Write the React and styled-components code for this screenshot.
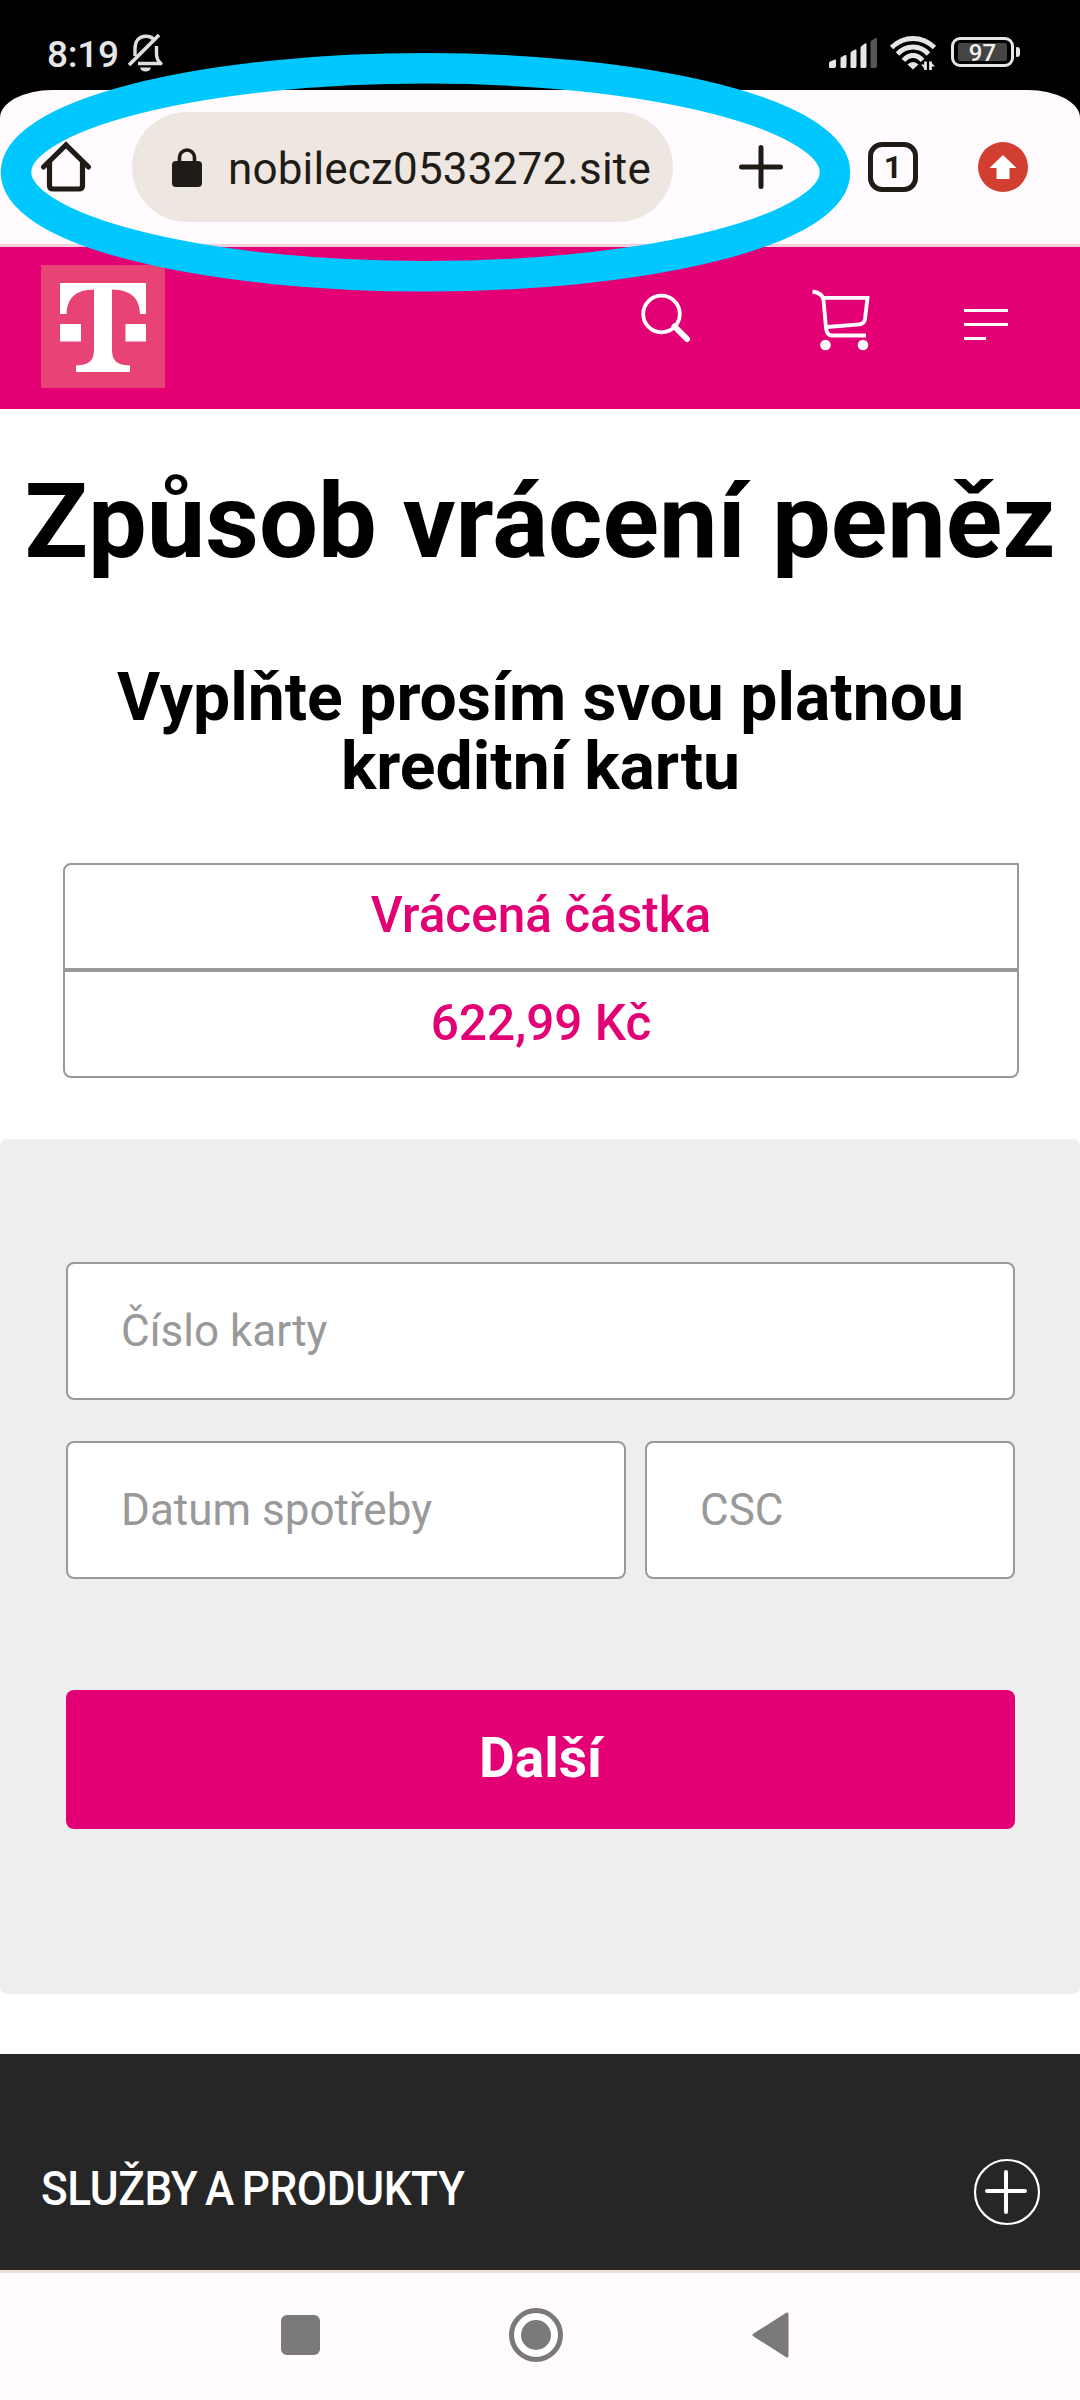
import React from "react";
import styled, { createGlobalStyle } from "styled-components";

const magenta = "#e20074";

const GlobalStyle = createGlobalStyle`
  *, *::before, *::after { box-sizing: border-box; }
  body { margin: 0; background: #fff; font-family: Roboto, "Noto Sans", sans-serif; }
  svg { display: block; flex: none; overflow: visible; }
`;

const Screen = styled.div`
  position: relative;
  display: flex;
  flex-direction: column;
  width: 1080px;
  height: 2400px;
  overflow: hidden;
  background: #fff;
`;

const TopArea = styled.div`
  background: #000;
`;

const StatusBar = styled.div`
  display: flex;
  height: 90px;
  padding: 34px 60px 0 47px;
`;

const Clock = styled.span`
  width: 81px;
  line-height: 42px;
  font-size: 37px;
  font-weight: 500;
  letter-spacing: -0.3px;
  color: #e6e6e6;
`;

const StatusIcons = styled.div`
  display: flex;
  gap: 13px;
  margin-left: auto;
  padding-top: 2px;
`;

const Battery = styled.div`
  display: flex;
  align-items: center;
  gap: 2px;
  height: 31px;
  margin-left: 2px;
  padding-top: 1px;
`;

const BatteryCell = styled.div`
  width: 63px;
  height: 30px;
  padding: 3px;
  border: 3px solid #e6e6e6;
  border-radius: 9px;
`;

const BatteryFill = styled.div`
  width: 49px;
  height: 18px;
  margin-left: 1px;
  border-radius: 2px;
  background: #444;
  color: #f0f0f0;
  font-size: 24px;
  font-weight: 500;
  line-height: 21px;
  text-align: center;
`;

const BatteryTip = styled.div`
  width: 4px;
  height: 10px;
  border-radius: 1px 3px 3px 1px;
  background: #e6e6e6;
`;

const BrowserBar = styled.div`
  display: flex;
  align-items: center;
  height: 157px;
  padding: 0 52px 0 41px;
  border-bottom: 3px solid #f6cfdc;
  border-radius: 52px 52px 0 0 / 28px 28px 0 0;
  background: #fffbff;
`;

const AddressPill = styled.div`
  display: flex;
  align-items: center;
  width: 541px;
  height: 110px;
  margin: 0 66px 0 41px;
  padding-left: 40px;
  border-radius: 55px;
  background: #ede6e1;
`;

const Address = styled.span`
  padding: 3px 0 0 26px;
  color: #1f1b16;
  font-size: 44px;
  line-height: 60px;
  letter-spacing: 0.17px;
  white-space: nowrap;
`;

const TabCount = styled.div`
  display: flex;
  align-items: center;
  justify-content: center;
  width: 50px;
  height: 50px;
  margin: 0 60px 0 85px;
  border: 5.5px solid #1f1b16;
  border-radius: 14px;
  color: #1f1b16;
  font-size: 32px;
  font-weight: 700;
  line-height: 36px;
`;

const SiteHeader = styled.header`
  display: flex;
  align-items: flex-start;
  height: 162px;
  padding: 18px 72px 0 41px;
  background: ${magenta};
`;

const Logo = styled.div`
  width: 124px;
  height: 123px;
  padding: 18px 19px;
  background: #e74475;
`;

const HeaderActions = styled.div`
  display: flex;
  margin-left: auto;
`;

const SearchSlot = styled.div`
  padding: 29px 121px 0 0;
`;

const CartSlot = styled.div`
  padding: 25px 94px 0 0;
`;

const MenuLines = styled.div`
  display: flex;
  flex-direction: column;
  gap: 11px;
  width: 44px;
  padding-top: 44px;
`;

const MenuLine = styled.span`
  width: ${(p) => (p.$short ? 22 : 44)}px;
  height: 3px;
  background: #fff;
`;

const Title = styled.h1`
  margin: 53px 0 0;
  font-size: 104.5px;
  font-weight: 700;
  line-height: 120px;
  text-align: center;
  white-space: nowrap;
  color: #000;
`;

const Subtitle = styled.h2`
  margin: 81px 0 62px;
  padding-left: 1px;
  font-size: 66.1px;
  font-weight: 700;
  line-height: 69px;
  text-align: center;
  color: #000;
`;

const AmountTable = styled.div`
  width: 956px;
  margin: 0 61px 61px 63px;
  color: ${magenta};
  font-size: 49.5px;
  font-weight: 500;
  text-align: center;
`;

const AmountCell = styled.div`
  height: ${(p) => (p.$last ? 108 : 107)}px;
  padding-bottom: 3px;
  border: 2px solid #999;
  border-radius: ${(p) => (p.$last ? "0 0 8px 8px" : "8px 0 0 0")};
  line-height: ${(p) => (p.$last ? 103 : 101)}px;
`;

const CardForm = styled.section`
  height: 855px;
  padding: 123px 65px 0 66px;
  border-radius: 8px;
  background: #eee;
`;

const FieldRow = styled.div`
  display: grid;
  grid-template-columns: ${(p) => (p.$split ? "560px 370px" : "1fr")};
  gap: 19px;
  margin-bottom: 41px;
`;

const Field = styled.div`
  height: 138px;
  padding-left: 53px;
  border: 2px solid #999;
  border-radius: 8px;
  background: #fff;
  color: #999;
  font-size: 44px;
  line-height: 134px;
`;

const NextButton = styled.div`
  height: 139px;
  margin-top: 111px;
  border-radius: 8px;
  background: ${magenta};
  color: #fff;
  font-size: 55px;
  font-weight: 700;
  line-height: 137px;
  text-align: center;
`;

const Footer = styled.footer`
  display: flex;
  align-items: flex-start;
  justify-content: space-between;
  height: 216px;
  margin-top: 60px;
  padding: 105px 40px 0 41px;
  background: #262626;
`;

const FooterTitle = styled.span`
  color: #fff;
  font-size: 49px;
  font-weight: 500;
  letter-spacing: -0.45px;
  word-spacing: -3px;
  line-height: 60px;
  white-space: nowrap;
  transform: scaleX(0.9);
  transform-origin: left center;
`;

const NavBar = styled.nav`
  display: flex;
  align-items: center;
  height: 130px;
  padding: 0 291px 3px 281px;
  border-top: 3px solid #ebe0d9;
  background: #fffbff;
  justify-content: space-between;
`;

const Highlight = styled.svg`
  position: absolute;
  top: 0;
  left: 0;
`;

const MutedBell = () => (
  <svg width="36" height="38" viewBox="0 0 36 38" fill="none" stroke="#e0e0e0" strokeWidth="3.4">
    <path d="M7 22V15C7 7 11 2.300 18 2.300C22 2.300 25 4 27 7" />
    <path d="M28.500 12V20C28.500 24 30 27 33 29.500H10" strokeLinejoin="round" />
    <path d="M1 31L31 1" strokeWidth="3.800" />
    <path d="M12 33.500H23C22 36.500 20 37.500 17.500 37.500C15 37.500 13 36.500 12 33.500Z" fill="#e0e0e0" stroke="none" />
  </svg>
);

const Signal = () => (
  <svg width="48" height="32" viewBox="0 0 48 32" fill="#e6e6e6">
    <path d="M0 31V27Q0 26 1 25.500L6 23.500Q7 23.300 7 24.500V30Q7 32 5 32H1Q0 32 0 31Z" />
    <path d="M11.500 31V22.500Q11.500 21.500 12.500 21L16 19Q17.500 18.500 17.500 20V30Q17.500 32 16 32H12.500Q11.500 32 11.500 31Z" />
    <path d="M21.500 31V17.500Q21.500 16.500 22.500 15.500L26 13.500Q27.500 13 27.500 14.500V30Q27.500 32 26 32H22.500Q21.500 32 21.500 31Z" />
    <path d="M31.500 31V12Q31.500 11 32.500 10L36 7.500Q37.500 6.500 37.500 8.500V30Q37.500 32 36 32H32.500Q31.500 32 31.500 31Z" />
    <path fill="#555" d="M41.500 31V6.500Q41.500 5.500 42.500 4.500L46.500 2Q48 1.500 48 3V30Q48 32 46.500 32H42.500Q41.500 32 41.500 31Z" />
  </svg>
);

const Wifi = () => (
  <svg width="46" height="34" viewBox="0 0 46 34">
    <g fill="none" stroke="#e6e6e6" strokeWidth="4.800">
      <path d="M1.500 11.500Q11 2.500 23 2.500T44.500 11.500" />
      <path d="M7.500 18Q14 11 23 11T38.500 18" />
      <path d="M13.500 24.500Q17.500 19.500 23 19.500T32.500 24.500" />
    </g>
    <path fill="#e6e6e6" d="M23 33.500L17.500 28.500Q20 26 23 26T28.500 28.500Z" />
    <path d="M35.500 25.500V34M40.500 25.500V34" fill="none" stroke="#e6e6e6" strokeWidth="2.800" />
    <path d="M31 28.500L35.500 34V28.500ZM40.500 25.500L45 30.500H40.500Z" fill="#e6e6e6" />
  </svg>
);

const HomeIcon = () => (
  <svg width="50" height="50" viewBox="0 0 50 50" fill="none" stroke="#1f1b16" strokeWidth="5.200">
    <path d="M2.500 25L25 3L47.500 25" strokeLinecap="round" />
    <path d="M8.500 20V43.500Q8.500 47 12 47H38Q41.500 47 41.500 43.500V20" />
  </svg>
);

const LockIcon = () => (
  <svg width="30" height="39" viewBox="0 0 30 39">
    <rect y="13" width="30" height="26" rx="4" fill="#1f1b16" />
    <path d="M7.500 14V9.500A7.500 7.500 0 0 1 22.500 9.500V14" fill="none" stroke="#1f1b16" strokeWidth="3.600" />
  </svg>
);

const PlusIcon = () => (
  <svg width="44" height="44" viewBox="0 0 44 44" stroke="#1f1b16" strokeWidth="5" strokeLinecap="round">
    <path d="M22 2.500V41.500M2.500 22H41.500" />
  </svg>
);

const UpdateIcon = () => (
  <svg width="50" height="50" viewBox="0 0 50 50">
    <circle cx="25" cy="25" r="25" fill="#d23f31" />
    <path fill="#fff" d="M25 13L38.500 26H31.500V37H18.500V26H11.500Z" />
  </svg>
);

const LogoMark = () => (
  <svg width="86" height="89" viewBox="0 0 86 89" fill="#fff">
    <path d="M0 0H86V31H80C79.500 15 71 7 52 6.500V66C52 77 56 82 70 82.500V89H16V82.500C30 82 34 77 34 66V6.500C15 7 7.500 15 6.500 31H0Z" />
    <path d="M0 41H21V58.500H0ZM65.500 41H86V58.500H65.500Z" />
  </svg>
);

const SearchIcon = () => (
  <svg width="50" height="50" viewBox="0 0 50 50" fill="none" stroke="#fff">
    <circle cx="20.500" cy="20" r="18.300" strokeWidth="3.800" />
    <path d="M33.500 32.500L46 45" strokeWidth="6" strokeLinecap="round" />
  </svg>
);

const CartIcon = () => (
  <svg width="58" height="60" viewBox="0 0 58 60" fill="none" stroke="#fff" strokeWidth="3.800">
    <path d="M0.500 1.500C7 2.500 11 5 11.500 10L14 38C14.500 43 16 45.500 20 45.500H54" />
    <path d="M12 7.800H55.500L53 29C52.500 32.500 51 34 47.500 34.300L15 37" />
    <circle cx="13.500" cy="55" r="5.300" fill="#fff" stroke="none" />
    <circle cx="51" cy="55" r="5.300" fill="#fff" stroke="none" />
  </svg>
);

const ExpandIcon = () => (
  <svg width="66" height="66" viewBox="0 0 66 66" fill="none" stroke="#fff">
    <circle cx="33" cy="33" r="32" strokeWidth="2.200" />
    <path d="M32 13V53M13 32H51" strokeWidth="4" strokeLinecap="round" />
  </svg>
);

const RecentsIcon = () => (
  <svg width="39" height="40" viewBox="0 0 39 40">
    <rect width="39" height="40" rx="6" fill="#7a7a7a" />
  </svg>
);

const NavHomeIcon = () => (
  <svg width="54" height="54" viewBox="0 0 54 54">
    <circle cx="27" cy="27" r="24.500" fill="#fff" stroke="#7a787b" strokeWidth="5" />
    <circle cx="27" cy="27" r="15" fill="#7a7a7a" />
  </svg>
);

const BackIcon = () => (
  <svg width="37" height="46" viewBox="0 0 37 46">
    <path d="M2 23L35 2V44Z" fill="#7a7a7a" stroke="#7a7a7a" strokeWidth="3" strokeLinejoin="round" />
  </svg>
);

export default function App() {
  return (
    <Screen>
      <GlobalStyle />
      <TopArea>
        <StatusBar>
          <Clock>8:19</Clock>
          <MutedBell />
          <StatusIcons>
            <Signal />
            <Wifi />
            <Battery>
              <BatteryCell>
                <BatteryFill>97</BatteryFill>
              </BatteryCell>
              <BatteryTip />
            </Battery>
          </StatusIcons>
        </StatusBar>
        <BrowserBar>
          <HomeIcon />
          <AddressPill>
            <LockIcon />
            <Address>nobilecz0533272.site</Address>
          </AddressPill>
          <PlusIcon />
          <TabCount>1</TabCount>
          <UpdateIcon />
        </BrowserBar>
      </TopArea>
      <SiteHeader>
        <Logo>
          <LogoMark />
        </Logo>
        <HeaderActions>
          <SearchSlot>
            <SearchIcon />
          </SearchSlot>
          <CartSlot>
            <CartIcon />
          </CartSlot>
          <MenuLines>
            <MenuLine />
            <MenuLine />
            <MenuLine $short />
          </MenuLines>
        </HeaderActions>
      </SiteHeader>
      <main>
        <Title>Způsob vrácení peněz</Title>
        <Subtitle>
          Vyplňte prosím svou platnou
          <br />
          kreditní kartu
        </Subtitle>
        <AmountTable>
          <AmountCell>Vrácená částka</AmountCell>
          <AmountCell $last>622,99 Kč</AmountCell>
        </AmountTable>
        <CardForm>
          <FieldRow>
            <Field>Číslo karty</Field>
          </FieldRow>
          <FieldRow $split>
            <Field>Datum spotřeby</Field>
            <Field>CSC</Field>
          </FieldRow>
          <NextButton>Další</NextButton>
        </CardForm>
      </main>
      <Footer>
        <FooterTitle>SLUŽBY A PRODUKTY</FooterTitle>
        <ExpandIcon />
      </Footer>
      <NavBar>
        <RecentsIcon />
        <NavHomeIcon />
        <BackIcon />
      </NavBar>
      <Highlight width="1080" height="300" viewBox="0 0 1080 300">
        <ellipse cx="425.500" cy="172.300" rx="409.500" ry="104" fill="none" stroke="#00c8ff" strokeWidth="30.500" />
      </Highlight>
    </Screen>
  );
}
